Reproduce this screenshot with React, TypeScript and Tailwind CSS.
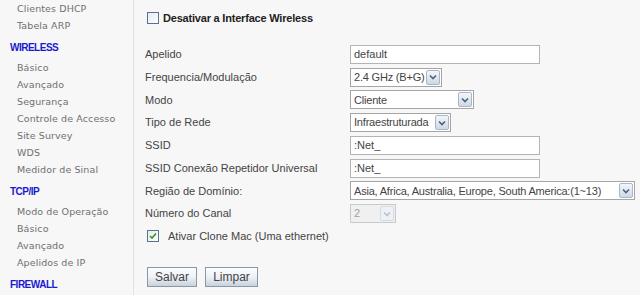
import type { ReactNode } from "react";

const menu: { title?: string; items: string[] }[] = [
  { items: ["Clientes DHCP", "Tabela ARP"] },
  {
    title: "WIRELESS",
    items: ["Básico", "Avançado", "Segurança", "Controle de Accesso", "Site Survey", "WDS", "Medidor de Sinal"]
  },
  { title: "TCP/IP", items: ["Modo de Operação", "Básico", "Avançado", "Apelidos de IP"] },
  { title: "FIREWALL", items: [] }
];

function Arrow({ disabled }: { disabled?: boolean }) {
  return (
    <div
      className={
        "ml-auto mr-px flex h-[15px] w-[14px] shrink-0 items-center justify-center rounded-[2px] border " +
        (disabled
          ? "border-[#d3dbe4] bg-[#eef2f6]"
          : "border-[#a8b6c6] bg-gradient-to-b from-[#f3f6fa] to-[#cfd9e4]")
      }
    >
      <svg width="8" height="6" viewBox="0 0 8 6">
        <path
          d="M1 1.5 L4 4.5 L7 1.5"
          fill="none"
          stroke={disabled ? "#b6c2d0" : "#4d6185"}
          strokeWidth="1.6"
        />
      </svg>
    </div>
  );
}

function Select({ value, width, disabled }: { value: string; width: string; disabled?: boolean }) {
  return (
    <div
      className={
        "flex h-[19px] items-center border pl-[3px] " +
        width +
        (disabled ? " border-[#c9c9c9] bg-[#f0f0f0] text-[#a0a0a0]" : " border-[#a5a5a5] bg-white text-[#444]")
      }
    >
      <span className="whitespace-nowrap tracking-[-0.2px]">{value}</span>
      <Arrow disabled={disabled} />
    </div>
  );
}

function TextInput({ value }: { value: string }) {
  return (
    <div className="flex h-[19px] w-[190px] items-center border border-[#b4b4b4] bg-white pl-[3px] text-[#444]">
      {value}
    </div>
  );
}

function Row({ label, children }: { label: string; children: ReactNode }) {
  return (
    <div className="flex h-[22.75px] items-center">
      <div className="w-[205px] text-[#444]">{label}</div>
      {children}
    </div>
  );
}

function Checkbox({ checked }: { checked?: boolean }) {
  return (
    <div className="flex h-[12px] w-[12px] items-center justify-center border border-[#5a7394] bg-gradient-to-br from-[#e6e9ee] to-white">
      {checked ? (
        <svg width="8" height="8" viewBox="0 0 8 8">
          <path d="M1 4 L3 6 L7 1.5" fill="none" stroke="#2f9a1c" strokeWidth="1.6" />
        </svg>
      ) : null}
    </div>
  );
}

function Button({ children, width }: { children: ReactNode; width: string }) {
  return (
    <button
      className={
        "h-[20px] border border-[#8a97a8] bg-gradient-to-b from-[#fdfdfe] via-[#eef1f5] to-[#c9d1dc] text-[12px] text-[#444] " +
        width
      }
      type="button"
    >
      {children}
    </button>
  );
}

export default function App() {
  return (
    <div className="flex h-[295px] w-[640px] overflow-hidden bg-[#f7f7f7] font-['Liberation_Sans',Arial,sans-serif] text-[11px]">
      <div className="w-[134px] shrink-0 border-r border-[#e2e2e2] bg-[#f7f7f7] pt-[1px]">
        {menu.map((group, i) => (
          <div key={i}>
            {group.title ? (
              <div className="my-[4px] flex h-[17px] items-center pl-[10px] text-[10px] font-bold tracking-[-0.5px] text-[#1a1ad0]">
                {group.title}
              </div>
            ) : null}
            {group.items.map((item) => (
              <div
                className="flex h-[17px] items-center pl-[17px] font-['DejaVu_Sans',Verdana,sans-serif] text-[9.5px] tracking-[0.1px] text-[#707070]"
                key={item}
              >
                {item}
              </div>
            ))}
          </div>
        ))}
      </div>

      <div className="flex-1 pl-[11px]">
        <div className="flex h-[36px] items-center gap-[4px] pl-[2px]">
          <Checkbox />
          <span className="text-[11px] font-bold tracking-[-0.2px] text-[#222]">Desativar a Interface Wireless</span>
        </div>
        <div className="h-[7px]" />
        <Row label="Apelido">
          <TextInput value="default" />
        </Row>
        <Row label="Frequencia/Modulação">
          <Select value="2.4 GHz (B+G)" width="w-[92px]" />
        </Row>
        <Row label="Modo">
          <Select value="Cliente" width="w-[124px]" />
        </Row>
        <Row label="Tipo de Rede">
          <Select value="Infraestruturada" width="w-[101px]" />
        </Row>
        <Row label="SSID">
          <TextInput value=":Net_" />
        </Row>
        <Row label="SSID Conexão Repetidor Universal">
          <TextInput value=":Net_" />
        </Row>
        <Row label="Região de Domínio:">
          <Select value="Asia, Africa, Australia, Europe, South America:(1~13)" width="w-[285px]" />
        </Row>
        <Row label="Número do Canal">
          <Select value="2" width="w-[46px]" disabled />
        </Row>
        <div className="flex h-[22.75px] items-center gap-[9px] pl-[2px]">
          <Checkbox checked />
          <span className="text-[#444]">Ativar Clone Mac (Uma ethernet)</span>
        </div>
        <div className="mt-[19px] flex gap-[8px] pl-[2px]">
          <Button width="w-[50px]">Salvar</Button>
          <Button width="w-[53px]">Limpar</Button>
        </div>
      </div>
    </div>
  );
}
